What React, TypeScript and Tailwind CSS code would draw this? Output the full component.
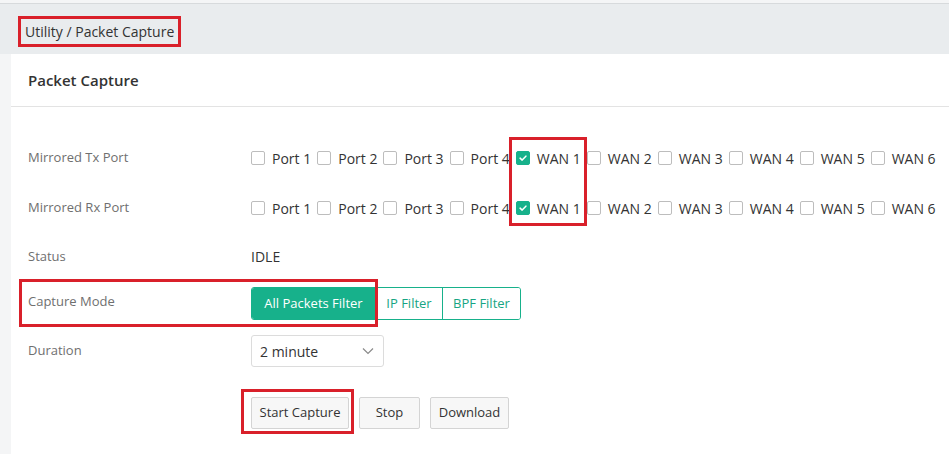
import { useState } from "react";

const PORTS = ["Port 1", "Port 2", "Port 3", "Port 4", "WAN 1", "WAN 2", "WAN 3", "WAN 4", "WAN 5", "WAN 6"];

function Check({ checked }: { checked: boolean }) {
  return (
    <span
      className={
        "flex h-[14px] w-[14px] shrink-0 items-center justify-center rounded-[2px] border " +
        (checked ? "border-[#17b18b] bg-[#17b18b]" : "border-[#bdbdbd] bg-white")
      }>
      {checked && (
        <svg viewBox="0 0 12 12" className="h-[10px] w-[10px]">
          <path d="M2.5 6.2 L5 8.5 L9.5 3.8" fill="none" stroke="white" strokeWidth="1.8" strokeLinecap="round" strokeLinejoin="round" />
        </svg>
      )}
    </span>
  );
}

function PortRow({ label }: { label: string }) {
  const [sel, setSel] = useState<string[]>(["WAN 1"]);
  return (
    <div className="flex h-[50px] items-center">
      <div className="w-[223px] shrink-0 text-[13px] text-[#6f6f6f]">{label}</div>
      <div className="flex shrink-0 items-center whitespace-nowrap">
        {PORTS.map((p) => (
          <label
            key={p}
            className="mr-[6px] flex cursor-pointer items-center gap-[7px] text-[14px] text-[#333]"
            onClick={() => setSel((s) => (s.includes(p) ? s.filter((x) => x !== p) : [...s, p]))}>
            <Check checked={sel.includes(p)} />
            <span>{p}</span>
          </label>
        ))}
      </div>
    </div>
  );
}

export default function App() {
  const [mode, setMode] = useState<string>("All Packets Filter");

  return (
    <div className="relative h-[454px] w-[949px] overflow-hidden bg-[#f4f5f6] font-['Open_Sans',sans-serif]">
      {/* header strip */}
      <div className="mt-[3px] h-[51px] border-t border-[#d7dadc] bg-[#e9ecee] pl-[18px] pt-[12px]">
        <div className="inline-block border-[3px] border-[#d9202a] px-[4px] py-[1px] text-[14px] leading-[23px] text-[#333]">
          Utility / Packet Capture
        </div>
      </div>

      {/* card */}
      <div className="ml-[11px] h-[400px] bg-white">
        <div className="flex h-[53px] items-center border-b border-[#e3e3e3] pl-[17px] text-[15px] font-semibold text-[#333]">
          Packet Capture
        </div>

        <div className="pl-[17px] pt-[26px]">
          <PortRow label="Mirrored Tx Port" />
          <PortRow label="Mirrored Rx Port" />

          <div className="flex h-[47px] items-center">
            <div className="w-[223px] shrink-0 text-[13px] text-[#6f6f6f]">Status</div>
            <div className="text-[14px] text-[#333]">IDLE</div>
          </div>

          <div className="flex h-[47px] items-center">
            <div className="w-[223px] shrink-0 -translate-y-[2px] text-[13px] text-[#6f6f6f]">Capture Mode</div>
            <div className="flex h-[33px] overflow-hidden rounded-[3px] border border-[#17b18b]">
              {[
                { m: "All Packets Filter", w: "w-[123px]" },
                { m: "IP Filter", w: "w-[67px]" },
                { m: "BPF Filter", w: "w-[78px]" },
              ].map(({ m, w }, i) => (
                <button
                  key={m}
                  onClick={() => setMode(m)}
                  className={
                    w +
                    " text-[13px] " +
                    (i > 0 ? "border-l border-[#17b18b] " : "") +
                    (mode === m ? "bg-[#17b18b] text-white" : "bg-white text-[#17a583]")
                  }>
                  {m}
                </button>
              ))}
            </div>
          </div>

          <div className="flex h-[48px] items-center">
            <div className="w-[223px] shrink-0 text-[13px] text-[#6f6f6f]">Duration</div>
            <div className="flex h-[32px] w-[133px] items-center justify-between rounded-[3px] border border-[#dcdcdc] bg-white pl-[8px] pr-[8px] text-[14px] text-[#333]">
              <span>2 minute</span>
              <svg viewBox="0 0 14 14" className="h-[14px] w-[14px]">
                <path d="M2 4.5 L7 9.5 L12 4.5" fill="none" stroke="#8a8a8a" strokeWidth="1.2" />
              </svg>
            </div>
          </div>

          <div className="mt-[22px] flex gap-[10px] pl-[223px]">
            <button className="h-[32px] w-[98px] rounded-[2px] border border-[#d4d4d4] bg-[#f7f7f7] text-[13px] text-[#333]">
              Start Capture
            </button>
            <button className="h-[32px] w-[61px] rounded-[2px] border border-[#d4d4d4] bg-[#f7f7f7] text-[13px] text-[#333]">
              Stop
            </button>
            <button className="h-[32px] w-[79px] rounded-[2px] border border-[#d4d4d4] bg-[#f7f7f7] text-[13px] text-[#333]">
              Download
            </button>
          </div>
        </div>
      </div>

      {/* red annotation boxes */}
      <div className="pointer-events-none absolute left-[509px] top-[137px] h-[89px] w-[78px] border-[3px] border-[#d9202a]" />
      <div className="pointer-events-none absolute left-[19px] top-[279px] h-[48px] w-[359px] border-[3px] border-[#d9202a]" />
      <div className="pointer-events-none absolute left-[241px] top-[389px] h-[45px] w-[113px] border-[3px] border-[#d9202a]" />
    </div>
  );
}
